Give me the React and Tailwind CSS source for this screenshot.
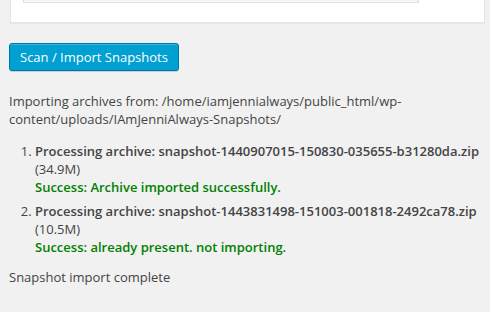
import React from "react";

const archives = [
  {
    name: "snapshot-1440907015-150830-035655-b31280da.zip",
    size: "(34.9M)",
    status: "Success: Archive imported successfully.",
  },
  {
    name: "snapshot-1443831498-151003-001818-2492ca78.zip",
    size: "(10.5M)",
    status: "Success: already present. not importing.",
  },
];

export default function App() {
  return (
    <div
      className="w-[490px] h-[312px] overflow-hidden bg-[#f1f1f1] text-[#444] text-[13px] leading-[18px]"
      style={{ fontFamily: '"Open Sans", sans-serif' }}
    >
      <div className="ml-[10px] w-[475px] h-[23px] bg-white border-x border-b border-[#e5e5e5] shadow-[0_1px_1px_rgba(0,0,0,0.04)]">
        <div className="ml-[12px] w-[396px] h-[3px] border-x border-b border-[#ddd] shadow-[inset_0_1px_2px_rgba(0,0,0,0.07)]" />
      </div>

      <div className="pl-[9px] pr-[6px]">
        <button className="mt-[20px] h-[28px] px-[10px] rounded-[3px] bg-[#00a0d2] border border-[#0073aa] text-white text-[13px] leading-[26px] shadow-[inset_0_1px_0_rgba(120,200,230,0.5),0_1px_0_rgba(0,0,0,0.15)]">
          Scan / Import Snapshots
        </button>

        <p className="mt-[21px]">
          Importing archives from: /home/iamjennialways/public_html/wp-
          <br />
          content/uploads/IAmJenniAlways-Snapshots/
        </p>

        <ol className="mt-[14px] list-decimal pl-[26px]">
          {archives.map((a) => (
            <li key={a.name} className="mb-[6px] pl-[0px]">
              <div className="font-semibold whitespace-nowrap">
                Processing archive: {a.name}
              </div>
              <div>{a.size}</div>
              <div className="font-semibold text-[#008000]">{a.status}</div>
            </li>
          ))}
        </ol>

        <p className="mt-[12px]">Snapshot import complete</p>
      </div>
    </div>
  );
}
